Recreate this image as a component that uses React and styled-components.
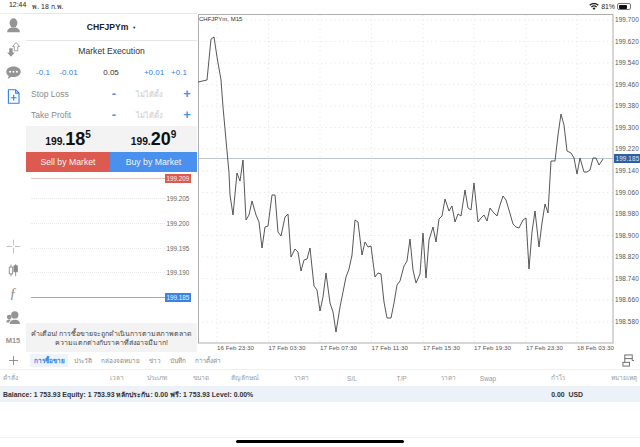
import styled, { createGlobalStyle } from 'styled-components';

const GlobalStyle = createGlobalStyle`
  html, body {
    margin: 0;
    padding: 0;
    background: #fff;
  }
  body {
    width: 640px;
    height: 447px;
    overflow: hidden;
    font-family: "Liberation Sans", "Noto Sans", sans-serif;
    color: #222;
  }
  * {
    box-sizing: border-box;
  }
`;

const linePoints = `198,82 207,80 211,39 214,37 217,57 221,80 223,107 226,140 229,173 230,195 233,215 237,173 240,181 243,160 246,220
249,215 252,201 256,215 259,222 262,248 265,227 268,226 272,195 275,195 278,232 281,236 285,217 288,214 291,257 295,249 298,252 301,271
304,260 307,259 310,248 314,286 317,290 320,311 323,297 326,273 330,303 333,312 336,332 340,307 343,292 346,277 349,269 352,255 355,220
358,222 362,255 365,242 368,247 371,246 375,277 378,273 381,274 384,302 387,318 391,318 394,303 397,285 400,281 404,266 407,261 410,239
413,270 416,283 420,274 423,233 426,278 429,240 433,227 436,242 439,219 442,216 445,199 449,211 452,206 455,222 458,214 461,216 465,190
468,208 471,210 474,183 478,222 481,218 484,215 487,221 490,208 493,212 497,216 500,205 503,196 506,200 509,210 513,224 516,227 519,228
523,220 526,218 529,269 532,232 535,211 539,247 542,223 545,204 548,213 551,161 555,161 558,135 561,114 564,125 567,151 571,153 574,158
577,174 580,158 584,172 587,172 590,170 593,158 596,158 599,165 603,159`;

const prices = [
  ['199.700', 20], ['199.620', 41.5], ['199.540', 63], ['199.460', 84.5], ['199.380', 106],
  ['199.300', 127.5], ['199.220', 149], ['199.140', 171], ['199.060', 192.5], ['198.980', 214],
  ['198.900', 235.5], ['198.820', 257], ['198.740', 278.5], ['198.660', 300], ['198.580', 322],
];

const times = [
  ['16 Feb 23:30', 217], ['17 Feb 03:30', 268.5], ['17 Feb 07:30', 320], ['17 Feb 11:30', 371.5],
  ['17 Feb 15:30', 423], ['17 Feb 19:30', 474], ['17 Feb 23:30', 526], ['18 Feb 03:30', 577],
];

const miniRows = [
  { label: '199.205', top: 10 },
  { label: '199.200', top: 15 },
  { label: '199.195', top: 15 },
  { label: '199.190', top: 14.5 },
];

const columns = [
  ['คำสั่ง', 'left'], ['เวลา', 'center'], ['ประเภท', 'center'], ['ขนาด', 'center'],
  ['สัญลักษณ์', 'center'], ['ราคา', 'center'], ['S/L', 'center'], ['T/P', 'center'],
  ['ราคา', 'center'], ['Swap', 'center'], ['กำไร', 'center'], ['หมายเหตุ', 'right'],
];

const tabs = ['การซื้อขาย', 'ประวัติ', 'กล่องจดหมาย', 'ข่าว', 'บันทึก', 'การตั้งค่า'];

function PriceChart() {
  return (
    <ChartSvg viewBox="198 13 442 339">
      {prices.map(([, y]) => (
        <line key={y} x1="198" x2="613" y1={y} y2={y} stroke="#e0e0e0" strokeWidth="0.8" strokeDasharray="1.2 3.2" />
      ))}
      {times.map(([, x]) => (
        <line key={x} x1={x} x2={x} y1="15" y2="343" stroke="#e0e0e0" strokeWidth="0.8" strokeDasharray="1.2 3.2" />
      ))}
      <line x1="198" x2="613" y1="158.5" y2="158.5" stroke="#bcc6d0" strokeWidth="1" />
      <rect x="198.5" y="14.5" width="414.5" height="328.5" fill="none" stroke="#aeaeae" strokeWidth="1" />
      <polyline points={linePoints} fill="none" stroke="#444" strokeWidth="0.9" strokeLinejoin="round" />
      <text x="199" y="21" fontSize="6" fill="#333">CHFJPYm, M15</text>
      {prices.map(([label, y]) => (
        <text key={label} x="615" y={y + 2.3} fontSize="6.4" letterSpacing="0.1" fill="#555">{label}</text>
      ))}
      {times.map(([label, x]) => (
        <text key={label} x={x} y="349.5" fontSize="6.2" letterSpacing="0.05" fill="#555">{label}</text>
      ))}
      <rect x="614" y="154" width="26" height="9" fill="#2f5f9f" />
      <text x="615.5" y="161" fontSize="6.4" letterSpacing="0.1" fill="#dfe8f3">199.185</text>
    </ChartSvg>
  );
}

function RailIcons() {
  return (
    <>
      <RailIcon viewBox="0 0 20 20" fill="#949494">
        <ellipse cx="10" cy="7" rx="4.6" ry="5.4" />
        <path d="M2.5 18c0-3.6 2.8-5 5-5.6h5c2.2.6 5 2 5 5.6z" />
      </RailIcon>
      <RailIcon viewBox="0 0 20 20">
        <path d="M5 8.5h4v5h2.5L7 18.5l-4.5-5H5z" fill="#949494" />
        <path d="M11 11.5v-5H8.8L13 1.8l4.2 4.7H15v5z" fill="#fff" stroke="#949494" strokeWidth="1" />
      </RailIcon>
      <RailIcon viewBox="0 0 20 20" fill="#949494">
        <path d="M10 3c5 0 8.5 2.7 8.5 6.2s-3.5 6.2-8.5 6.2c-.9 0-1.7-.1-2.5-.3L3.5 17.5l.8-3.5C2.5 12.9 1.5 11.2 1.5 9.2 1.5 5.7 5 3 10 3z" />
        <circle cx="6" cy="9.2" r="1.2" fill="#fff" />
        <circle cx="10" cy="9.2" r="1.2" fill="#fff" />
        <circle cx="14" cy="9.2" r="1.2" fill="#fff" />
      </RailIcon>
      <RailIcon viewBox="0 0 20 20" fill="none" stroke="#2f80ed" strokeWidth="1.3">
        <path d="M4 2h8.5L16.5 6v12H4z" />
        <path d="M12.5 2v4h4M10.2 8v7M6.8 11.5h6.8" />
      </RailIcon>
      <RailSpacer />
      <RailIcon viewBox="0 0 20 20" stroke="#b4b4b4" strokeWidth="1" fill="none">
        <path d="M10 2v6.500M10 11.500V18M2 10h6.500M11.500 10H18" />
      </RailIcon>
      <RailIcon viewBox="0 0 20 20">
        <path d="M7 3v14M12.500 2.500v14" stroke="#888" strokeWidth="1" />
        <rect x="5" y="6" width="4" height="8" fill="#fff" stroke="#888" />
        <rect x="10.500" y="4.500" width="4" height="7" fill="#888" stroke="#888" />
      </RailIcon>
      <RailGlyph>ƒ</RailGlyph>
      <RailIcon viewBox="0 0 20 20" fill="#949494">
        <circle cx="11.500" cy="7" r="4.300" />
        <path d="M5.500 17.500c0-3.500 2.500-5 6-5s6 1.500 6 5z" />
        <circle cx="5" cy="9.500" r="2.800" />
        <path d="M1.500 16c0-2.400 1.500-3.700 3.500-3.700 1 0 1.500.2 2 .6-1.300.8-2 1.900-2.200 3.100z" />
      </RailIcon>
      <RailText>M15</RailText>
    </>
  );
}

export default function App() {
  return (
    <Page>
      <GlobalStyle />
      <StatusBar>
        <StatusTime>12:44<StatusDate>พ. 18 ก.พ.</StatusDate></StatusTime>
        <StatusRight>
          <svg width="10" height="7" viewBox="0 0 11 8" fill="#222">
            <path d="M5.500 8 3.800 6a2.500 2.500 0 0 1 3.400 0zM3 5.100l-1-1.100a5.300 5.300 0 0 1 7 0L8 5.100a3.800 3.800 0 0 0-5 0zM1.200 3.200 0 2a8 8 0 0 1 11 0L9.800 3.200a6.300 6.300 0 0 0-8.600 0z" />
          </svg>
          <span>81%</span>
          <Battery><BatteryFill /></Battery>
        </StatusRight>
      </StatusBar>

      <Workspace>
        <Rail><RailIcons /></Rail>
        <OrderPanel>
          <SymbolHeader>CHFJPYm<Caret>▼</Caret></SymbolHeader>
          <ExecutionTitle>Market Execution</ExecutionTitle>
          <VolumeRow>
            <VolumeStep>-0.1</VolumeStep>
            <VolumeStep>-0.01</VolumeStep>
            <VolumeValue>0.05</VolumeValue>
            <VolumeStep>+0.01</VolumeStep>
            <VolumeStep>+0.1</VolumeStep>
          </VolumeRow>
          <LevelRow>
            <LevelName>Stop Loss</LevelName>
            <LevelSign>-</LevelSign>
            <LevelValue>ไม่ได้ตั้ง</LevelValue>
            <LevelSign>+</LevelSign>
          </LevelRow>
          <LevelRow>
            <LevelName>Take Profit</LevelName>
            <LevelSign>-</LevelSign>
            <LevelValue>ไม่ได้ตั้ง</LevelValue>
            <LevelSign>+</LevelSign>
          </LevelRow>
          <QuoteRow>
            <Quote>199.<QuoteBig>18</QuoteBig><sup>5</sup></Quote>
            <Quote>199.<QuoteBig>20</QuoteBig><sup>9</sup></Quote>
          </QuoteRow>
          <TradeButtons>
            <TradeButton $color="#dd5a50">Sell by Market</TradeButton>
            <TradeButton $color="#4a90ee">Buy by Market</TradeButton>
          </TradeButtons>
          <MiniChart>
            <MiniRow $solid="#e8c8c2">
              <MiniLine />
              <MiniTag $color="#dd5a50">199.209</MiniTag>
            </MiniRow>
            {miniRows.map(row => (
              <MiniRow key={row.label} $top={row.top}>
                <MiniLine />
                <MiniTag>{row.label}</MiniTag>
              </MiniRow>
            ))}
            <MiniRow $top={14.5} $solid="#7fb0ee">
              <MiniLine />
              <MiniTag $color="#3b82e6">199.185</MiniTag>
            </MiniRow>
          </MiniChart>
          <Warning>คำเตือน! การซื้อขายจะถูกดำเนินการตามสภาพตลาด<br />ความแตกต่างกับราคาที่ส่งอาจมีมาก!</Warning>
        </OrderPanel>
        <PriceChart />
      </Workspace>

      <TabBar>
        <AddButton viewBox="0 0 9 9" stroke="#777" strokeWidth="0.8">
          <path d="M4.500 0v9M0 4.500h9" />
        </AddButton>
        {tabs.map((tab, i) => (
          <Tab key={tab} $active={i === 0}>{tab}</Tab>
        ))}
        <LayoutIcon viewBox="0 0 14 14" fill="none" stroke="#666" strokeWidth="1">
          <rect x="3" y="1" width="8" height="4" />
          <rect x="1" y="9" width="7" height="4" />
          <path d="M3 5v4M11 5v2h2" />
        </LayoutIcon>
      </TabBar>

      <TableHead>
        {columns.map(([label, align], i) => (
          <HeadCell key={i} $align={align}>{label}</HeadCell>
        ))}
      </TableHead>

      <BalanceRow>
        <span>Balance: 1 753.93 Equity: 1 753.93 หลักประกัน: 0.00 ฟรี: 1 753.93 Level: 0.00%</span>
        <BalanceProfit>0.00&nbsp;&nbsp;USD</BalanceProfit>
      </BalanceRow>

      <Bottom>
        <HomeRow>
          <HomeBar />
        </HomeRow>
      </Bottom>
    </Page>
  );
}

const Page = styled.div`
  width: 640px;
  height: 447px;
  display: flex;
  flex-direction: column;
  background: #fff;
`;

const StatusBar = styled.div`
  height: 13px;
  display: flex;
  justify-content: space-between;
  align-items: center;
  padding: 0 9px 0 9px;
  font-size: 6.9px;
  color: #222;
`;

const StatusTime = styled.div`
  display: flex;
  gap: 6px;
`;

const StatusDate = styled.span``;

const StatusRight = styled.div`
  display: flex;
  align-items: center;
  gap: 2px;
`;

const Battery = styled.div`
  width: 14px;
  height: 7px;
  border: 1px solid #777;
  border-radius: 2px;
  padding: 0.5px;
`;

const BatteryFill = styled.div`
  width: 81%;
  height: 100%;
  background: #111;
  border-radius: 1px;
`;

const Workspace = styled.div`
  height: 339px;
  display: flex;
  align-items: stretch;
`;

const Rail = styled.div`
  width: 26px;
  display: flex;
  flex-direction: column;
  align-items: center;
  padding: 3px 0 4px;
  border-top: 1px solid #ececec;
`;

const RailIcon = styled.svg`
  width: 17px;
  height: 17px;
  margin-bottom: 6.5px;
  flex: none;
`;

const RailSpacer = styled.div`
  flex: 1;
`;

const RailGlyph = styled.div`
  height: 17px;
  margin-bottom: 6.5px;
  font-size: 14px;
  line-height: 17px;
  font-style: italic;
  color: #888;
  font-family: "Liberation Serif", serif;
`;

const RailText = styled.div`
  height: 14px;
  margin-top: 2px;
  font-size: 7.5px;
  line-height: 14px;
  font-weight: bold;
  color: #949494;
`;

const OrderPanel = styled.div`
  width: 171px;
  margin-right: 1px;
  display: flex;
  flex-direction: column;
  background: #fff;
  border: 1px solid #e8e8e8;
  border-width: 1px 0 0 0;
  flex: none;
`;

const SymbolHeader = styled.div`
  height: 27px;
  display: flex;
  align-items: center;
  justify-content: center;
  gap: 4px;
  font-size: 8.6px;
  font-weight: bold;
  color: #222;
  border-bottom: 1px solid #e6e6e6;
`;

const Caret = styled.span`
  font-size: 4px;
`;

const ExecutionTitle = styled.div`
  height: 21px;
  line-height: 20px;
  text-align: center;
  font-size: 8.6px;
  color: #333;
`;

const VolumeRow = styled.div`
  height: 21px;
  display: grid;
  grid-template-columns: 26px 25px 60px 26px 24px;
  align-items: center;
  justify-items: center;
  padding-left: 4px;
  font-size: 8px;
`;

const VolumeStep = styled.span`
  color: #2f80ed;
`;

const VolumeValue = styled.span`
  color: #333;
`;

const LevelRow = styled.div`
  height: 21px;
  display: grid;
  grid-template-columns: 73px 20px 51px 24px;
  align-items: center;
  padding-left: 5px;
`;

const LevelName = styled.span`
  font-size: 8.5px;
  color: #8a8a8a;
`;

const LevelSign = styled.span`
  font-size: 13px;
  line-height: 14px;
  font-weight: bold;
  color: #4a90ee;
  text-align: center;
`;

const LevelValue = styled.span`
  font-size: 7.5px;
  color: #c8c8c8;
  text-align: center;
`;

const QuoteRow = styled.div`
  height: 26px;
  margin-top: 1px;
  display: grid;
  grid-template-columns: 84px 1fr;
  background: #f3f3f4;
  align-items: center;
  justify-items: center;

  sup {
    font-size: 10px;
    line-height: 10px;
    vertical-align: 7px;
  }
`;

const Quote = styled.div`
  font-size: 10.3px;
  font-weight: bold;
  color: #111;
  line-height: 26px;
`;

const QuoteBig = styled.span`
  font-size: 18px;
`;

const TradeButtons = styled.div`
  height: 20px;
  flex: none;
  display: grid;
  grid-template-columns: 84px 1fr;
`;

const TradeButton = styled.div`
  background: ${({ $color }) => $color};
  color: #f4f4f4;
  font-size: 8.7px;
  line-height: 20px;
  text-align: center;
`;

const MiniChart = styled.div`
  flex: 1;
  padding: 1px 6px 0 5px;
  display: flex;
  flex-direction: column;
`;

const MiniLine = styled.div`
  flex: 1;
  height: 0;
`;

const MiniRow = styled.div`
  height: 10px;
  margin-top: ${({ $top }) => ($top ? `${$top}px` : '0')};
  display: flex;
  align-items: center;

  ${MiniLine} {
    border-top: ${({ $solid }) => ($solid ? `1.5px solid ${$solid}` : '1px dotted #e8e8e8')};
  }
`;

const MiniTag = styled.span`
  width: 26px;
  height: 9px;
  line-height: 9px;
  text-align: center;
  font-size: 6.3px;
  color: ${({ $color }) => ($color ? '#f2f2f2' : '#666')};
  background: ${({ $color }) => $color || 'transparent'};
`;

const Warning = styled.div`
  height: 29px;
  background: #f3f3f3;
  font-size: 7px;
  line-height: 9px;
  text-align: center;
  color: #444;
  padding-top: 6px;
  white-space: nowrap;
`;

const ChartSvg = styled.svg`
  width: 442px;
  height: 339px;
  flex: none;
  font-family: "Liberation Sans", sans-serif;
`;

const TabBar = styled.div`
  height: 18px;
  display: flex;
  align-items: center;
  border-bottom: 1px solid #f0f0f0;
  padding: 0 5px 0 9px;
`;

const AddButton = styled.svg`
  width: 9px;
  height: 9px;
  margin-right: 12px;
`;

const Tab = styled.div`
  padding: 0 3.5px;
  height: 13px;
  line-height: 13px;
  margin-right: 2px;
  font-size: 6.4px;
  font-weight: ${({ $active }) => ($active ? 'bold' : 'normal')};
  color: ${({ $active }) => ($active ? '#2f80ed' : '#888')};
  background: ${({ $active }) => ($active ? '#eef3f9' : 'transparent')};
`;

const LayoutIcon = styled.svg`
  width: 13px;
  height: 13px;
  margin-left: auto;
`;

const TableHead = styled.div`
  height: 16px;
  display: grid;
  grid-template-columns: 97px 33px 47px 41px 48px 64px 38px 61px 33px 46px 93px 1fr;
  align-items: center;
  padding: 0 3px;
`;

const HeadCell = styled.span`
  font-size: 6.5px;
  color: #999;
  white-space: nowrap;
  text-align: ${({ $align }) => $align};
`;

const BalanceRow = styled.div`
  height: 16px;
  display: flex;
  align-items: center;
  justify-content: space-between;
  padding: 0 57px 0 3px;
  background: #edf2f8;
  font-size: 6.9px;
  font-weight: bold;
  color: #333;
`;

const BalanceProfit = styled.span``;

const Bottom = styled.div`
  flex: 1;
  display: flex;
  flex-direction: column;
  justify-content: flex-end;
`;

const HomeRow = styled.div`
  height: 10px;
  border-top: 1px solid #f0f0f0;
  display: flex;
  justify-content: center;
  padding-top: 2px;
`;

const HomeBar = styled.div`
  width: 168px;
  height: 3px;
  border-radius: 2px;
  background: #000;
`;
